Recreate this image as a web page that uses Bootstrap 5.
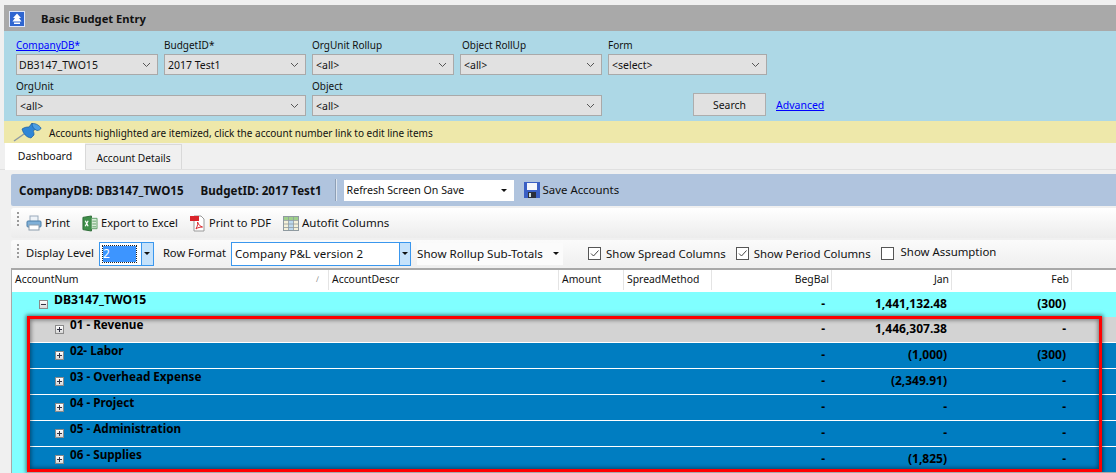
<!DOCTYPE html>
<html lang="en">
<head>
<meta charset="utf-8">
<title>Basic Budget Entry</title>
<link rel="stylesheet" href="https://cdn.jsdelivr.net/npm/bootstrap@5.3.0/dist/css/bootstrap.min.css">
<style>
html,body{height:473px;overflow:hidden;background:#f0f0f0;}
body{font-family:"Noto Sans","Open Sans",sans-serif;font-size:11px;line-height:14px;color:#111;}
.shell{width:1116px;height:473px;padding-top:5px;overflow:hidden;position:relative;}
.titlebar{margin-left:4px;height:26px;background:#a9a9a9;padding-left:5px;}
.titlebar b{margin-left:16px;font-size:11.2px;padding-top:2px;}
.upicon{width:16px;height:16px;display:block;margin-top:1px;}
.filters{margin-left:4px;height:90px;background:#add8e6;padding:7px 0 0 12px;}
.frow{display:flex;gap:6px;height:41px;}
.fld{display:flex;flex-direction:column;gap:2px;}
.fld label{height:14px;margin:0;white-space:nowrap;font-size:10px;}
.lblshift{padding-left:2px;}
.lblback{margin-left:-1px;}
.w142{width:142px}.w159{width:159px}.w290{width:290px}
.fsel{height:21px;border:1px solid #a9a9a9;background:#e1e1e1;padding:0 4px 0 2px;display:flex;align-items:center;justify-content:space-between;font-size:10.5px;}
.fsel svg{margin-right:2px;}
.pad4{padding-left:3px;}
.searchbtn{width:73px;height:23px;border:1px solid #adadad;background:#e1e1e1;margin:0 4px 4px 85px;display:flex;align-items:center;justify-content:center;align-self:flex-end;font-size:10.4px;}
.adv{align-self:flex-end;padding-bottom:8px;color:#00f;text-decoration:underline;font-size:10.5px;}
.frow a.flink{color:#00f;text-decoration:underline;}
.notice{margin-left:4px;height:22px;background:#eee8aa;position:relative;padding:2px 0 0 45px;display:flex;align-items:center;font-size:10px;}
.pin{position:absolute;left:9px;top:2px;}
.tabstrip{height:27px;padding-left:5px;display:flex;align-items:flex-end;border-bottom:1px solid #e0e0e0;}
.tabon{width:80px;height:27px;background:#fff;display:flex;align-items:center;justify-content:center;padding-bottom:2px;margin-bottom:-1px;font-size:10.5px;}
.taboff{width:97px;height:25px;background:#f0f0f0;border:1px solid #d9d9d9;border-bottom:0;display:flex;align-items:center;justify-content:center;font-size:10.2px;padding-top:1px;}
.panel{margin:4px 0 0 11px;}
.bluebar{height:32px;background:#b0c4de;border-radius:2px 0 0 2px;display:flex;align-items:center;padding-left:8px;}
.bluebar b{font-size:11.6px;padding-top:2px;}
.bluebar b+b{margin-left:17px;}
.vsep{width:1px;height:22px;background:#8e9fb5;border-right:1px solid #dde5ef;margin:0 7px 0 13px;box-sizing:content-box;}
.refresh{width:170px;height:21px;background:#fff;padding:0 3px;display:flex;align-items:center;justify-content:space-between;font-size:10.6px;}
.caret{width:0;height:0;border-left:3px solid transparent;border-right:3px solid transparent;border-top:3px solid #111;margin-right:4px;flex:none;}
.savebtn{margin-left:10px;display:flex;align-items:center;gap:3px;font-size:11.4px;}
.tb1{margin-top:2px;height:30px;background:linear-gradient(#fff,#ececec);display:flex;align-items:center;position:relative;padding-left:15px;border-radius:3px 0 0 3px;font-size:11.1px;}
.tb2{margin-top:2px;height:27px;background:linear-gradient(#fbfbfb,#efefef);display:flex;align-items:center;padding-left:15px;position:relative;border-radius:3px 0 0 3px;font-size:11.2px;}
.up1{margin-top:-2px;}
.up2{margin:-4px 0 0 2px;}
.grip{width:2px;height:14px;position:absolute;left:6px;top:4px;background:repeating-linear-gradient(#9a9a9a 0 2px,transparent 2px 4px);}
.tool{display:flex;align-items:center;gap:3px;margin-right:12px;white-space:nowrap;}
.wide{font-size:11.5px;}
.lvl{width:55px;height:24px;border:1px solid #3a97ee;background:#fff;margin:0 9px 0 5px;display:flex;padding:3px 0 3px 3px;}
.lvlin{width:33px;height:16px;background:#3d95ff;outline:1px dotted #222;color:#fff;line-height:16px;font-size:12px;}
.spin{margin-left:auto;width:12px;margin-top:-3px;margin-bottom:-3px;background:#c5e2fb;border-left:1px solid #3a97ee;display:flex;align-items:center;justify-content:center;}
.spin .caret{margin:0;}
.fmt{width:180px;height:24px;border:1px solid #3a97ee;background:#fff;margin:0 6px 0 5px;display:flex;align-items:center;padding-left:3px;font-size:11.5px;}
.fmt .spin{margin:0 0 0 auto;height:22px;width:11px;}
.rollup{display:flex;align-items:center;width:146px;height:22px;justify-content:space-between;background:#fbfbfb;margin-right:25px;font-size:11.6px;}
.chk{width:13px;height:13px;border:1px solid #555;background:#fff;display:inline-flex;flex:none;margin-right:5px;}
.chkgrp{display:flex;align-items:center;white-space:nowrap;margin-right:10px;font-size:11.4px;}
.gridwrap{margin-top:1px;border-top:2px solid #a8a8a8;border-left:1px solid #a8a8a8;margin-left:0;background:#80ffff;height:205px;}
.ghead{display:flex;height:22px;background:#fff;font-size:10.4px;}
.ghead>div,.grow1>div{flex:none;}
.hc{height:20px;border-right:1px solid #e4e4e4;padding:2px 2px 0 3px;white-space:nowrap;}
.c1{width:317px}.c2{width:230px}.c3{width:65px}.c4{width:88px}.c5{width:120px}.c6{width:120px}.c7{width:120px}.c8{width:45px}
.tr{text-align:right;}
.hc.nob{border:0}
.sorter{float:right;color:#888;font-size:8px;margin-right:7px;}
.gbody{font-weight:700;color:#000;}
.grow1{display:flex;height:26px;font-size:11.7px;}
.rootrow{height:25px;}
.level{margin-left:16px;border-bottom:1px solid #fff;}
.gray{background:#d3d3d3;}
.blue{background:#007dc1;}
.name{display:flex;align-items:flex-start;}
.exp{width:9px;height:9px;border:1px solid #8a8a8a;background:linear-gradient(#fff,#d8d8d8);position:relative;flex:none;margin-top:8px;}
.exp::before{content:"";position:absolute;left:1px;right:1px;top:3px;height:1px;background:#334;}
.exp.plus::after{content:"";position:absolute;top:1px;bottom:1px;left:3px;width:1px;background:#334;}
.rootrow .c1{padding-left:27px;}
.rootrow .nm{margin:0 0 0 6px;line-height:15px;font-size:12.2px;}
.level .c1{width:301px;padding-left:27px;}
.level .nm{margin-left:6px;line-height:15px;}
.num{padding:4px 6px 0 0;line-height:15px;font-size:12px;}
.grow1 .c5{padding-right:7px;}
.grow1 .c6{padding-right:5px;}
.redbox{position:absolute;left:27px;top:316px;width:1075px;height:156px;border:3px solid #f00;box-shadow:0 0 4px 1px rgba(0,0,0,.55),inset 0 0 4px 1px rgba(0,0,0,.45);pointer-events:none;}
.floor{position:absolute;left:27px;right:0;top:472px;height:1px;background:#a9a9a9;}
</style>
</head>
<body>
<div class="shell">
  <div class="titlebar d-flex align-items-center">
    <svg class="upicon" viewBox="0 0 16 16"><rect width="16" height="16" fill="#2f66d0"/><rect x=".5" y=".5" width="15" height="15" fill="none" stroke="#dfe8fb"/><path d="M8 2.500 4 7h2L3.500 10.500h9L10 7h2zM5 11.500h6V13H5z" fill="#fff"/></svg>
    <b>Basic Budget Entry</b>
  </div>
  <div class="filters">
    <div class="frow">
      <div class="fld w142"><label><a class="flink" href="#">CompanyDB*</a></label><div class="fsel"><span>DB3147_TWO15</span><svg width="9" height="6" viewBox="0 0 9 6"><path d="M1 1l3.500 3.500L8 1" fill="none" stroke="#555"/></svg></div></div>
      <div class="fld w142"><label>BudgetID*</label><div class="fsel pad4"><span>2017 Test1</span><svg width="9" height="6" viewBox="0 0 9 6"><path d="M1 1l3.500 3.500L8 1" fill="none" stroke="#555"/></svg></div></div>
      <div class="fld w142"><label>OrgUnit Rollup</label><div class="fsel pad4"><span>&lt;all&gt;</span><svg width="9" height="6" viewBox="0 0 9 6"><path d="M1 1l3.500 3.500L8 1" fill="none" stroke="#555"/></svg></div></div>
      <div class="fld w142"><label class="lblshift">Object RollUp</label><div class="fsel pad4"><span>&lt;all&gt;</span><svg width="9" height="6" viewBox="0 0 9 6"><path d="M1 1l3.500 3.500L8 1" fill="none" stroke="#555"/></svg></div></div>
      <div class="fld w159"><label class="lblback">Form</label><div class="fsel pad4"><span>&lt;select&gt;</span><svg width="9" height="6" viewBox="0 0 9 6"><path d="M1 1l3.500 3.500L8 1" fill="none" stroke="#555"/></svg></div></div>
    </div>
    <div class="frow">
      <div class="fld w290"><label>OrgUnit</label><div class="fsel pad4"><span>&lt;all&gt;</span><svg width="9" height="6" viewBox="0 0 9 6"><path d="M1 1l3.500 3.500L8 1" fill="none" stroke="#555"/></svg></div></div>
      <div class="fld w290"><label>Object</label><div class="fsel pad4"><span>&lt;all&gt;</span><svg width="9" height="6" viewBox="0 0 9 6"><path d="M1 1l3.500 3.500L8 1" fill="none" stroke="#555"/></svg></div></div>
      <div class="searchbtn">Search</div>
      <a class="adv" href="#">Advanced</a>
    </div>
  </div>
  <div class="notice">
    <svg class="pin" width="30" height="20" viewBox="0 0 30 20"><path d="M1 18 11 11" stroke="#8d9aa3" stroke-width="1.500"/><path d="M9 6c1.500 5 4 8 9 9l3-3c0-2 0-3-1-4l4-3-5-5-3 4c-2 0-4 0-7 2z" fill="#2f86d6" stroke="#1a5c9e" stroke-width=".7"/><path d="M19 .5c3-.5 7 1.500 9 4.500 0 1.500-2 2.500-4 2.500-3-1-5-4-5-7z" fill="#4c9fe4" stroke="#1a5c9e" stroke-width=".7"/></svg>
    Accounts highlighted are itemized, click the account number link to edit line items
  </div>
  <div class="tabstrip">
    <div class="tabon">Dashboard</div>
    <div class="taboff">Account Details</div>
  </div>
  <div class="panel">
    <div class="bluebar">
      <b>CompanyDB: DB3147_TWO15</b><b>BudgetID: 2017 Test1</b>
      <span class="vsep"></span>
      <div class="refresh"><span>Refresh Screen On Save</span><span class="caret"></span></div>
      <div class="savebtn"><svg width="16" height="16" viewBox="0 0 16 16"><rect width="16" height="16" fill="#3a5fc4"/><rect x="3" y="1" width="10" height="7" fill="#f4f6fb"/><rect x="4" y="10" width="8" height="6" fill="#2b2f3a"/><rect x="5" y="11" width="2" height="4" fill="#cdd"/></svg><span>Save Accounts</span></div>
    </div>
    <div class="tb1">
      <span class="grip"></span>
      <div class="tool"><svg width="16" height="16" viewBox="0 0 16 16"><rect x="4" y="1" width="8" height="6" fill="#eef3f8" stroke="#9ab"/><rect x="1" y="6" width="14" height="6" rx="1" fill="#7fb0d8" stroke="#4d7ea8"/><rect x="3" y="10" width="10" height="5" fill="#fff" stroke="#8a9bab"/></svg>Print</div>
      <div class="tool"><svg width="16" height="17" viewBox="0 0 17 17"><path d="M1 2l9-1.500v16L1 15z" fill="#3f8f4a" stroke="#2a6a33"/><path d="M10 3h6v11h-6z" fill="#d8ecd8" stroke="#5f9e66"/><path d="M3.500 5.500l3 6M6.500 5.500l-3 6" stroke="#fff" stroke-width="1.300"/><path d="M11 6h4M11 9h4M11 12h4" stroke="#5f9e66"/></svg>Export to Excel</div>
      <div class="tool"><svg width="16" height="17" viewBox="0 0 16 17"><path d="M4 1h7l3 3v12H4z" fill="#fff" stroke="#999"/><rect y="1" width="9" height="5" fill="#d9252b"/><path d="M6 14c2-4 2-6 1.500-7 1 3 3 4.500 5 5-2 0-5 .500-6.500 2z" fill="none" stroke="#d9252b"/></svg>Print to PDF</div>
      <div class="tool wide"><svg width="16" height="16" viewBox="0 0 16 16"><rect x=".5" y="1.500" width="15" height="14" fill="#f5f1d8" stroke="#8f9aa0"/><rect x="1" y="2" width="14" height="3" fill="#9ecf8a"/><rect x="5.500" y="5" width="5" height="10" fill="#bcd9ef"/><path d="M5.500 2v13M10.500 2v13M1 5.500h14M1 9h14M1 12.500h14" stroke="#8f9aa0" stroke-width=".8"/></svg>Autofit Columns</div>
    </div>
    <div class="tb2">
      <span class="grip"></span>
      <span class="up1">Display Level</span>
      <div class="lvl"><span class="lvlin">2</span><span class="spin"><span class="caret"></span></span></div>
      <span class="up1">Row Format</span>
      <div class="fmt"><span>Company P&amp;L version 2</span><span class="spin"><span class="caret"></span></span></div>
      <div class="rollup"><span>Show Rollup Sub-Totals</span><span class="caret"></span></div>
      <div class="chkgrp"><span class="chk"><svg width="11" height="11" viewBox="0 0 11 11"><path d="M2 5.500l2.500 2.500L9.500 2.500" fill="none" stroke="#444"/></svg></span>Show Spread Columns</div>
      <div class="chkgrp"><span class="chk"><svg width="11" height="11" viewBox="0 0 11 11"><path d="M2 5.500l2.500 2.500L9.500 2.500" fill="none" stroke="#444"/></svg></span>Show Period Columns</div>
      <div class="chkgrp"><span class="chk"></span><span class="up2">Show Assumption</span></div>
    </div>
    <div class="gridwrap">
      <div class="ghead">
        <div class="hc c1">AccountNum<span class="sorter">&#8725;</span></div>
        <div class="hc c2">AccountDescr</div>
        <div class="hc c3">Amount</div>
        <div class="hc c4">SpreadMethod</div>
        <div class="hc c5 tr">BegBal</div>
        <div class="hc c6 tr">Jan</div>
        <div class="hc c7 tr">Feb</div>
        <div class="hc c8 nob"></div>
      </div>
      <div class="gbody">
        <div class="grow1 rootrow">
          <div class="c1 name"><span class="exp"></span><span class="nm">DB3147_TWO15</span></div>
          <div class="c2"></div><div class="c3"></div><div class="c4"></div>
          <div class="c5 num tr">-</div><div class="c6 num tr">1,441,132.48</div><div class="c7 num tr">(300)</div>
        </div>
        <div class="grow1 level gray">
          <div class="c1 name"><span class="exp plus"></span><span class="nm">01 - Revenue</span></div>
          <div class="c2"></div><div class="c3"></div><div class="c4"></div>
          <div class="c5 num tr">-</div><div class="c6 num tr">1,446,307.38</div><div class="c7 num tr">-</div>
        </div>
        <div class="grow1 level blue">
          <div class="c1 name"><span class="exp plus"></span><span class="nm">02- Labor</span></div>
          <div class="c2"></div><div class="c3"></div><div class="c4"></div>
          <div class="c5 num tr">-</div><div class="c6 num tr">(1,000)</div><div class="c7 num tr">(300)</div>
        </div>
        <div class="grow1 level blue">
          <div class="c1 name"><span class="exp plus"></span><span class="nm">03 - Overhead Expense</span></div>
          <div class="c2"></div><div class="c3"></div><div class="c4"></div>
          <div class="c5 num tr">-</div><div class="c6 num tr">(2,349.91)</div><div class="c7 num tr">-</div>
        </div>
        <div class="grow1 level blue">
          <div class="c1 name"><span class="exp plus"></span><span class="nm">04 - Project</span></div>
          <div class="c2"></div><div class="c3"></div><div class="c4"></div>
          <div class="c5 num tr">-</div><div class="c6 num tr">-</div><div class="c7 num tr">-</div>
        </div>
        <div class="grow1 level blue">
          <div class="c1 name"><span class="exp plus"></span><span class="nm">05 - Administration</span></div>
          <div class="c2"></div><div class="c3"></div><div class="c4"></div>
          <div class="c5 num tr">-</div><div class="c6 num tr">-</div><div class="c7 num tr">-</div>
        </div>
        <div class="grow1 level blue">
          <div class="c1 name"><span class="exp plus"></span><span class="nm">06 - Supplies</span></div>
          <div class="c2"></div><div class="c3"></div><div class="c4"></div>
          <div class="c5 num tr">-</div><div class="c6 num tr">(1,825)</div><div class="c7 num tr">-</div>
        </div>
      </div>
    </div>
  </div>
  <div class="redbox"></div>
  <div class="floor"></div>
</div>
<script src="https://cdn.jsdelivr.net/npm/bootstrap@5.3.0/dist/js/bootstrap.bundle.min.js"></script>
</body>
</html>
